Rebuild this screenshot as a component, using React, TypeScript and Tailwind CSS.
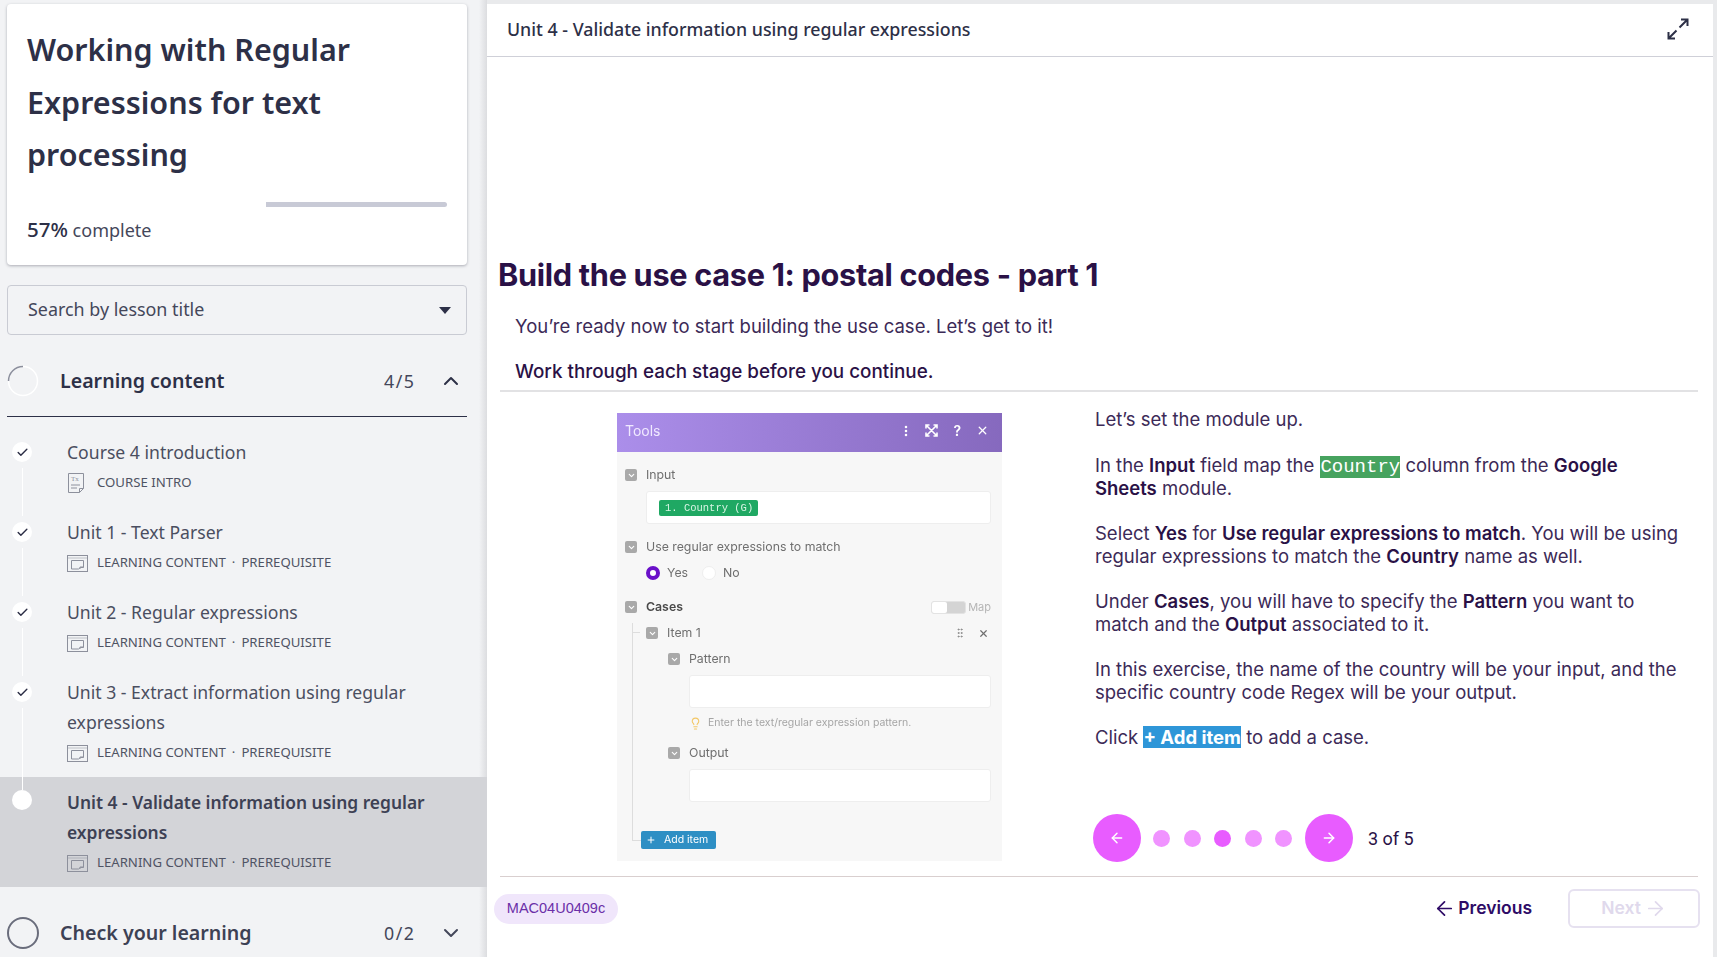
import React from "react";
import { Check, ChevronUp, ChevronDown, ArrowLeft, ArrowRight, Plus, X, EllipsisVertical, Lightbulb, GripVertical, ChevronDown as Chev } from "lucide-react";

const SIDE = "font-['Noto_Sans','Open_Sans',sans-serif]";
const INTER = "font-['Inter','Liberation_Sans',sans-serif]";

function DocIcon() {
  return (
    <svg width="20" height="22" viewBox="0 0 20 22" fill="none" stroke="#8d909c" strokeWidth="1" className="shrink-0">
      <path d="M1.5 1.5h15v15l-4 4h-11z" />
      <path d="M12.5 20.500v-4h4" />
      <text x="4" y="9" fontSize="7" fill="#8d909c" stroke="none" fontFamily="Liberation Serif, serif">Tx</text>
      <path d="M4 13h9M4 16h6" />
    </svg>
  );
}

function SlideIcon() {
  return (
    <svg width="21" height="17" viewBox="0 0 21 17" fill="none" stroke="#8d909c" strokeWidth="1" className="shrink-0">
      <rect x="0.5" y="0.5" width="20" height="16" />
      <path d="M0.5 3h20" strokeOpacity="0.5" />
      <path d="M4.5 5.500h12v7h-3l-2 1.500h-7z" />
      <path d="M13 14v-2h3.500" />
    </svg>
  );
}

type Item = { title: React.ReactNode; sub: string[]; doc?: boolean; active?: boolean; h: string; line?: string };

const items: Item[] = [
  { title: "Course 4 introduction", sub: ["COURSE INTRO"], doc: true, h: "h-[80px]", line: "bottom-[-2px]" },
  { title: "Unit 1 - Text Parser", sub: ["LEARNING CONTENT", "PREREQUISITE"], h: "h-[80px]", line: "bottom-[-2px]" },
  { title: "Unit 2 - Regular expressions", sub: ["LEARNING CONTENT", "PREREQUISITE"], h: "h-[80px]", line: "bottom-[-2px]" },
  { title: "Unit 3 - Extract information using regular expressions", sub: ["LEARNING CONTENT", "PREREQUISITE"], h: "h-[103px]", line: "bottom-[-13px]" },
  { title: "Unit 4 - Validate information using regular expressions", sub: ["LEARNING CONTENT", "PREREQUISITE"], active: true, h: "h-[110px]" },
];

function Row({ item }: { item: Item }) {
  return (
    <div className={`relative flex ${item.h} ${item.active ? "bg-[#d3d4d8] pt-[10px]" : "pt-[3px]"}`}>
      <div className="w-[67px] shrink-0 relative">
        <div className={`absolute left-[12px] ${item.active ? "top-[3px]" : "top-[5px]"} w-5 h-5 rounded-full bg-white flex items-center justify-center`}>
          {!item.active && <Check size={13} strokeWidth={2.6} color="#2a2c44" />}
        </div>
        {item.line && <div className={`absolute left-[21.5px] top-[31px] w-[1.5px] ${item.line} bg-white z-10`} />}
      </div>
      <div className="w-[385px]">
        <div className={`leading-[30px] ${item.active ? "text-[17.4px] font-semibold text-[#3d4154]" : "text-[17.6px] text-[#4a4e60]"}`}>{item.title}</div>
        <div className="flex items-center h-[32px]">
          <div className="w-[30px] shrink-0">{item.doc ? <DocIcon /> : <SlideIcon />}</div>
          <span className="text-[13.2px] text-[#4f5364] whitespace-nowrap">
            {item.sub[0]}
            {item.sub[1] && <span className="mx-[6px]">·</span>}
            {item.sub[1]}
          </span>
        </div>
      </div>
    </div>
  );
}

function Sidebar() {
  return (
    <aside className={`w-[487px] shrink-0 h-full bg-[#f2f3f5] relative overflow-hidden ${SIDE}`}>
      <div className="absolute right-0 top-0 bottom-0 w-[8px] bg-gradient-to-r from-[#f2f3f5] to-[#dcdde0]" />
      <div className="pt-[4px] pl-[7px] w-[467px]">
        <div className="w-[460px] h-[261px] bg-white rounded-[4px] shadow-[0_1px_3px_rgba(40,42,60,0.35)] pl-[20px] pr-[20px] pt-[19px]">
          <h1 className="text-[30.5px] leading-[52.5px] font-semibold text-[#2d3047]">
            Working with Regular<br />Expressions for text<br />processing
          </h1>
          <div className="mt-[21px] h-[5px] w-[420px] rounded-full bg-white flex justify-end">
            <div className="h-[5px] w-[181px] bg-[#c8cad6] rounded-r-full" />
          </div>
          <div className="mt-[8px] text-[18px] leading-[28px] text-[#44475a]"><span className="text-[20.5px] font-medium text-[#2d3047]">57%</span> complete</div>
        </div>
        <div className="mt-[20px] w-[460px] h-[50px] border border-[#c9cbd3] rounded-[4px] flex items-center pl-[20px] pr-[15px] pb-[2px] justify-between">
          <span className="text-[17.9px] text-[#44475a]">Search by lesson title</span>
          <svg width="12" height="7" viewBox="0 0 12 7" className="mt-[2px]"><path d="M0 0h12L6 7z" fill="#2d3047" /></svg>
        </div>
        <div className="mt-[20px] h-[62px] w-[460px] border-b border-[#2d3047] flex items-center pb-[9px]">
          <svg width="32" height="32" viewBox="0 0 32 32" className="ml-0 shrink-0">
            <circle cx="16" cy="16" r="14.5" fill="none" stroke="#ffffff" strokeWidth="1.5" />
            <path d="M1.500 16A14.500 14.500 0 0 1 16 1.500" fill="none" stroke="#8b8e9c" strokeWidth="1.5" />
          </svg>
          <span className="ml-[21px] text-[19.6px] font-semibold text-[#2d3047] flex-1">Learning content</span>
          <span className="text-[17.8px] text-[#44475a] w-[36px] tracking-[1.5px] translate-x-[3px]">4/5</span>
          <ChevronUp size={24} strokeWidth={2} color="#2d3047" className="ml-[22px] mr-[4px]" />
        </div>
      </div>
      <div className="mt-[17px] relative">
        {items.map((it, i) => <Row key={i} item={it} />)}
      </div>
      <div className="pl-[7px] w-[467px] flex items-center mt-[16px] h-[60px]">
        <div className="w-[32px] h-[32px] rounded-full border-[2.5px] border-[#6a6d7c] shrink-0" />
        <span className="ml-[21px] text-[19.6px] font-semibold text-[#3d4154] flex-1">Check your learning</span>
        <span className="text-[17.8px] text-[#44475a] w-[36px] tracking-[1.5px] translate-x-[3px]">0/2</span>
        <ChevronDown size={24} strokeWidth={2} color="#44475a" className="ml-[22px] mr-[4px]" />
      </div>
    </aside>
  );
}

function Box() {
  return (
    <span className="w-[12px] h-[12px] rounded-[2px] bg-[#a9a9a9] flex items-center justify-center shrink-0">
      <Chev size={9} color="#fff" strokeWidth={3} />
    </span>
  );
}

function Tools() {
  return (
    <div className={`w-[385px] h-[448px] shrink-0 bg-[#f7f7f7] text-[12.3px] text-[#6f6f6f] blur-[0.35px] ${INTER}`}>
      <div className="h-[39px] bg-gradient-to-r from-[#ab8eea] to-[#8669be] flex items-center pl-[8px] pr-[13px] pb-[4px] text-white">
        <span className="text-[14px] flex-1 text-[#f0e9ff]">Tools</span>
        <EllipsisVertical size={14} strokeWidth={2.4} className="mr-[12px]" />
        <svg width="13" height="13" viewBox="0 0 13 13" fill="none" stroke="#fff" strokeWidth="1.6" className="mr-[15px]">
          <path d="M1 4.500V1h3.500M8.500 1H12v3.500M12 8.500V12H8.500M4.500 12H1V8.500M1.500 1.500l10 10M11.500 1.500l-10 10" />
        </svg>
        <span className="mr-[15px] text-[14px] font-semibold">?</span>
        <X size={13} strokeWidth={2.4} />
      </div>
      <div className="relative pl-[8px] pr-[11px] pt-[15px]">
        <div className="flex items-center gap-[9px] h-[16px]"><Box /><span>Input</span></div>
        <div className="ml-[21px] mt-[8px] h-[33px] bg-white border border-[#eeeeee] rounded-[3px] flex items-center pl-[12px]">
          <span className="w-[99px] h-[16px] bg-[#1fa863] rounded-[2px] text-[10.5px] text-[#d8f5e4] pl-[6px] leading-[16px] font-['Liberation_Mono',monospace]">1. Country (G)</span>
        </div>
        <div className="flex items-center gap-[9px] h-[16px] mt-[15px]"><Box /><span>Use regular expressions to match</span></div>
        <div className="ml-[21px] mt-[10px] flex items-center h-[16px]">
          <span className="w-[14px] h-[14px] rounded-full border-[4px] border-[#6a10c9] bg-white" />
          <span className="ml-[7px]">Yes</span>
          <span className="ml-[14px] w-[14px] h-[14px] rounded-full border border-[#eeeeee] bg-white" />
          <span className="ml-[7px]">No</span>
        </div>
        <div className="flex items-center gap-[9px] h-[16px] mt-[18px]">
          <Box /><span className="font-semibold text-[#4a4a4a] flex-1">Cases</span>
          <span className="w-[35px] h-[13px] rounded-[3px] bg-[#d4d4d4] border border-[#e3e3e3] flex"><span className="w-[15px] h-full rounded-[2px] bg-white" /></span>
          <span className="ml-[-7px] text-[11px] text-[#b5b5b5]">Map</span>
        </div>
        <div className="absolute left-[15px] top-[171px] w-px h-[217px] bg-[#dddddd]" />
        <div className="absolute left-[15px] top-[180px] w-[8px] h-px bg-[#dddddd]" />
        <div className="absolute left-[15px] top-[388px] w-[9px] h-px bg-[#dddddd]" />
        <div className="flex items-center gap-[9px] h-[16px] mt-[10px] ml-[21px]">
          <Box /><span className="flex-1">Item 1</span>
          <GripVertical size={12} color="#8a8a8a" className="mr-[3px]" />
          <X size={11} strokeWidth={2.6} color="#6f6f6f" className="mr-[2px]" />
        </div>
        <div className="ml-[43px]">
          <div className="flex items-center gap-[9px] h-[16px] mt-[10px]"><Box /><span>Pattern</span></div>
          <div className="ml-[21px] mt-[8px] h-[33px] bg-white border border-[#eeeeee] rounded-[3px]" />
          <div className="ml-[21px] mt-[7px] flex items-center h-[16px] text-[10.5px] text-[#a5a5a5]">
            <Lightbulb size={13} color="#f3c766" className="ml-[0px] mr-[6px] shrink-0" />
            <span>Enter the text/regular expression pattern.</span>
          </div>
          <div className="flex items-center gap-[9px] h-[16px] mt-[14px]"><Box /><span>Output</span></div>
          <div className="ml-[21px] mt-[8px] h-[33px] bg-white border border-[#eeeeee] rounded-[3px]" />
        </div>
        <div className="mt-[29px] ml-[16px] w-[75px] h-[18px] bg-[#2e8fc4] rounded-[2px] flex items-center text-white text-[10.5px] pl-[5px] gap-[8px]">
          <Plus size={10} strokeWidth={2.4} />Add item
        </div>
      </div>
    </div>
  );
}

const B = ({ children }: { children: React.ReactNode }) => <b className="font-semibold text-[#2a1146]">{children}</b>;

function Dot({ on }: { on?: boolean }) {
  return <span className={`w-[17px] h-[17px] rounded-full ${on ? "bg-[#e85cff]" : "bg-[#f093ff]"}`} />;
}

function Main() {
  return (
    <main className={`flex-1 h-full pt-[4px] bg-[#e9eaec] pr-[4px] ${INTER}`}>
      <div className="bg-white h-full relative">
        <div className={`h-[53px] border-b border-[#cfd0d8] flex items-center justify-between pl-[20px] pr-[24px] pb-[2px] ${SIDE}`}>
          <span className="text-[17.8px] font-medium text-[#2d3047]">Unit 4 - Validate information using regular expressions</span>
          <svg width="22" height="22" viewBox="0 0 22 22" fill="none" stroke="#2d3047" strokeWidth="2">
            <path d="M12.500 9.500 20 2M14 1.500h6.500V8M9.500 12.500 2 20M1.500 14v6.500H8" />
          </svg>
        </div>
        <div className="pt-[196px] pl-[11px] pr-[15px]">
          <h2 className="text-[30.7px] leading-[44px] font-bold text-[#2a1146] tracking-[-0.3px] whitespace-nowrap">Build the use case 1: postal codes - part 1</h2>
          <p className="ml-[17px] mt-[16px] text-[18.5px] leading-[26px] text-[#3c2a57]">You’re ready now to start building the use case. Let’s get to it!</p>
          <p className="ml-[17px] mt-[20px] text-[18.85px] leading-[26px] font-medium text-[#2a1146]">Work through each stage before you continue.</p>
          <div className="ml-[2px] mt-[5px] h-[2px] bg-[#e2e2e4]" />
          <div className="flex mt-[21px] pl-[119px]">
            <Tools />
            <div className="ml-[93px] w-[600px] text-[18.5px] leading-[23px] text-[#3c2a57] flex flex-col h-[463px]">
              <div className="flex flex-col gap-[22px] -mt-[5px]">
                <p className="mb-[1px]">Let’s set the module up.</p>
                <p>In the <B>Input</B> field map the <span className="ml-[1px] bg-[#47a35f] text-white text-[19px] leading-[1] font-['Liberation_Mono',monospace]">Country</span> column from the <B>Google</B><br /><B>Sheets</B> module.</p>
                <p>Select <B>Yes</B> for <B>Use regular expressions to match</B>. You will be using<br />regular expressions to match the <B>Country</B> name as well.</p>
                <p>Under <B>Cases</B>, you will have to specify the <B>Pattern</B> you want to<br />match and the <B>Output</B> associated to it.</p>
                <p>In this exercise, the name of the country will be your input, and the<br />specific country code Regex will be your output.</p>
                <p>Click <span className="bg-[#2e96d8] text-white font-bold">+ Add item</span> to add a case.</p>
              </div>
              <div className="flex items-center mt-[65px] -ml-[2px]">
                <span className="w-[48px] h-[48px] rounded-full bg-[#e85cff] flex items-center justify-center"><ArrowLeft size={16} color="#fff" strokeWidth={2.2} /></span>
                <div className="flex items-center gap-[13.5px] ml-[12px] mr-[13px]"><Dot /><Dot /><Dot on /><Dot /><Dot /></div>
                <span className="w-[48px] h-[48px] rounded-full bg-[#e85cff] flex items-center justify-center"><ArrowRight size={16} color="#fff" strokeWidth={2.2} /></span>
                <span className="ml-[15px] text-[#2a1146] text-[18px] font-['Roboto',sans-serif]">3 of 5</span>
              </div>
            </div>
          </div>
        </div>
        <div className="ml-[13px] mr-[15px] h-px bg-[#d9cfcf]" />
        <div className="flex items-center pl-[7px] pr-[13px] mt-[12px]">
          <span className="h-[30px] w-[124px] rounded-full bg-[#f0e6fb] text-[#6b2fa8] text-[14.5px] flex items-center justify-center font-['Liberation_Sans',sans-serif]">MAC04U0409c</span>
          <span className="ml-auto flex items-center gap-[2px] text-[17.5px] font-semibold text-[#2e0b66]"><ArrowLeft size={23} strokeWidth={1.8} />Previous</span>
          <span className="ml-[36px] w-[132px] h-[39px] border-2 border-[#e6e1f0] rounded-[6px] flex items-center justify-center gap-[3px] text-[17.5px] font-semibold text-[#e0d9ec]">Next<ArrowRight size={23} strokeWidth={1.8} /></span>
        </div>
      </div>
    </main>
  );
}

export default function App() {
  return (
    <div className="flex w-full h-screen overflow-hidden bg-white">
      <Sidebar />
      <Main />
    </div>
  );
}
